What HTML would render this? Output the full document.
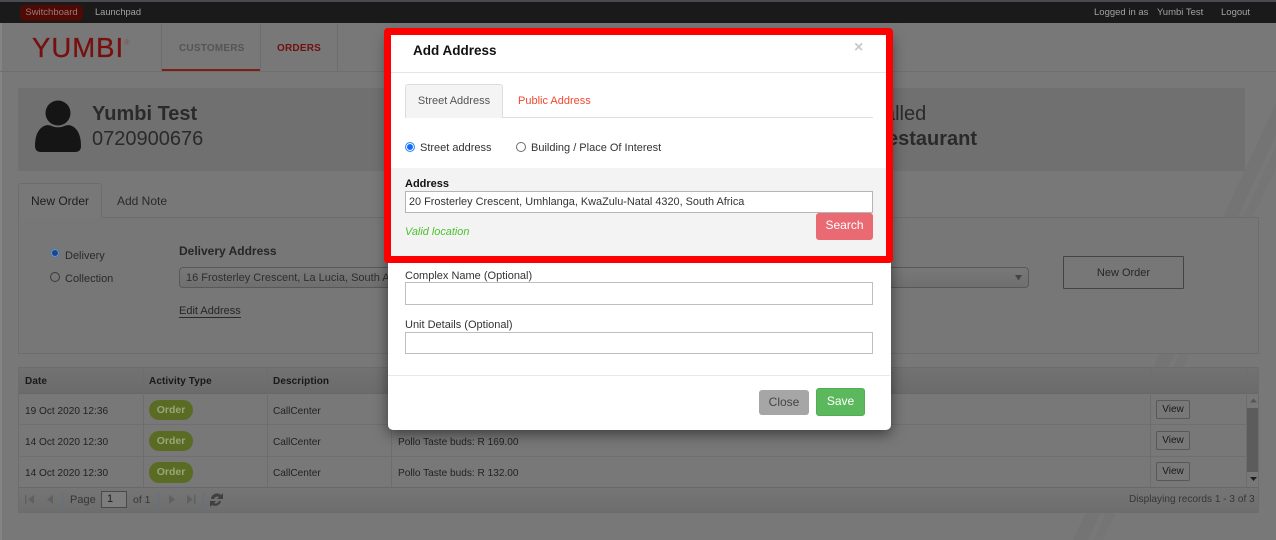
<!DOCTYPE html>
<html>
<head>
<meta charset="utf-8">
<style>
html,body{margin:0;padding:0}
body{width:1276px;height:540px;overflow:hidden;position:relative;background:#787878;font-family:"Liberation Sans",sans-serif;font-size:11px;color:#2c2c2c}
.a{position:absolute;white-space:nowrap;box-sizing:border-box}
.cell{font-size:10.100px;color:#222}
.hd{font-size:10px;letter-spacing:.1px;font-weight:bold;color:#181818}
.pill{position:absolute;left:149px;width:44px;height:20px;border-radius:10px;background:#5a6c24;color:#98a67a;font-size:10.500px;font-weight:bold;text-align:center;line-height:20px}
.view{position:absolute;left:1156px;width:34px;height:19px;border:1px solid #585858;border-radius:2px;background:#787878;color:#1a1a1a;font-size:10px;text-align:center;line-height:18px;box-sizing:border-box}
.hl{position:absolute;height:1px;background:#6d6d6d}
.vl{position:absolute;width:1px;background:#6d6d6d}
.m{font-size:11px;color:#333}
.inp{position:absolute;left:405px;width:468px;background:#fff;border:1px solid #bfbfbf;box-sizing:border-box}
.rad{position:absolute;width:10px;height:10px;border-radius:50%;box-sizing:border-box}
</style>
</head>
<body>
<!-- top bar -->
<div class="a" style="left:0;top:0;width:1276px;height:23px;background:#1a1a1a;border-top:2px solid #4a4a50"></div>
<div class="a" style="left:20px;top:5px;width:63px;height:16px;background:#4e0b06;border-radius:5px;color:#a07874;font-size:9.500px;text-align:center;line-height:15px">Switchboard</div>
<div class="a" style="left:95px;top:5px;color:#a3a3a3;font-size:9.300px;line-height:15px">Launchpad</div>
<div class="a" style="left:1094px;top:5px;color:#a3a3a3;font-size:9.500px;line-height:15px">Logged in as</div>
<div class="a" style="left:1157px;top:5px;color:#a3a3a3;font-size:9.500px;line-height:15px">Yumbi Test</div>
<div class="a" style="left:1221px;top:5px;color:#a3a3a3;font-size:9.500px;line-height:15px">Logout</div>
<div class="a" style="left:0;top:23px;width:2px;height:517px;background:#848484"></div>

<!-- diagonal decorations -->
<svg class="a" style="left:0;top:0" width="1276" height="540">
<path d="M1276 103L1276 135L1088 540L1073 540Z" fill="#747474"/>
<path d="M1276 146L1276 168L1103 540L1093 540Z" fill="#757575"/>
</svg>

<!-- nav -->
<div class="a" style="left:32px;top:32px;color:#761010;font-size:27.500px;line-height:32px;letter-spacing:1px;-webkit-text-stroke:.3px #761010">YUMBI</div>
<div class="a" style="left:124px;top:38px;color:#85504e;font-size:8px;line-height:9px">®</div>
<div class="hl" style="left:0;top:71px;width:1276px;background:#6e6e6e"></div>
<div class="vl" style="left:161px;top:24px;height:47px"></div>
<div class="vl" style="left:260px;top:24px;height:47px"></div>
<div class="vl" style="left:337px;top:24px;height:47px"></div>
<div class="a" style="left:162px;top:69px;width:98px;height:2px;background:#7a1f14"></div>
<div class="a" style="left:179px;top:42px;font-size:10px;font-weight:bold;color:#555;letter-spacing:.2px;line-height:14px">CUSTOMERS</div>
<div class="a" style="left:277px;top:42px;font-size:10px;font-weight:bold;color:#701010;letter-spacing:.2px;line-height:14px">ORDERS</div>

<!-- customer card -->
<div class="a" style="left:18px;top:88px;width:1227px;height:83px;background:#707070"></div>
<svg class="a" style="left:34px;top:100px" width="48" height="54" viewBox="0 0 48 54">
<circle cx="24" cy="13" r="12.500" fill="#151515"/>
<path d="M1 46C1 36 4 29 10 26C13 24.500 16 25 19 26.500C22 27.500 26 27.500 29 26.500C32 25 35 24.500 38 26C44 29 47 36 47 46C47 50 45 52 41 52H7C3 52 1 50 1 46Z" fill="#151515"/>
</svg>
<div class="a" style="left:92px;top:102px;font-size:20px;font-weight:bold;color:#2a2a2a;line-height:24px">Yumbi Test</div>
<div class="a" style="left:92px;top:127px;font-size:20px;color:#2a2a2a;line-height:25px">0720900676</div>
<div class="a" style="left:869.500px;top:102px;font-size:20px;color:#2a2a2a;line-height:24px">Called</div>
<div class="a" style="left:872.500px;top:127px;font-size:20px;font-weight:bold;color:#2a2a2a;line-height:24px">Restaurant</div>

<!-- tabs / order panel -->
<div class="a" style="left:18px;top:217px;width:1241px;height:137px;border:1px solid #6d6d6d;background:#777"></div>
<div class="a" style="left:18px;top:183px;width:84px;height:35px;border:1px solid #6d6d6d;border-bottom:none;background:#787878;border-radius:3px 3px 0 0;font-size:12px;color:#1e1e1e;text-align:center;line-height:34px">New Order</div>
<div class="a" style="left:117px;top:194px;font-size:12px;color:#2a2a2a;line-height:15px">Add Note</div>
<div class="rad" style="left:50px;top:248px;background:#124a96;border:1px solid #557aaa;box-shadow:inset 0 0 0 1px #87949f"></div>
<div class="a" style="left:65px;top:249px;line-height:14px;color:#2a2a2a;font-size:11px">Delivery</div>
<div class="rad" style="left:50px;top:272px;border:1px solid #3a3a3a"></div>
<div class="a" style="left:65px;top:272px;line-height:15px;color:#2a2a2a;font-size:11px">Collection</div>
<div class="a" style="left:179px;top:244px;font-size:12px;font-weight:bold;color:#262626;line-height:14px">Delivery Address</div>
<div class="a" style="left:179px;top:267px;width:850px;height:21px;border:1px solid #585858;border-radius:4px;background:linear-gradient(#787878,#6f6f6f);color:#2e2e2e;font-size:11px;line-height:21px;padding-left:6px">16 Frosterley Crescent, La Lucia, South Africa</div>
<svg class="a" style="left:1015px;top:275px" width="8" height="6"><path d="M0 0H7L3.500 5.500Z" fill="#444"/></svg>
<div class="a" style="left:179px;top:305px;height:12px;font-size:11px;color:#262626;line-height:12px;border-bottom:1px solid #2a2a2a;box-sizing:content-box">Edit Address</div>
<div class="a" style="left:1063px;top:256px;width:121px;height:33px;border:1px solid #444;border-radius:1px;font-size:11px;color:#262626;text-align:center;line-height:32px">New Order</div>

<!-- table -->
<div class="a" style="left:18px;top:367px;width:1241px;height:146px;border:1px solid #6d6d6d;background:#787878"></div>
<div class="a" style="left:19px;top:368px;width:1239px;height:25px;background:linear-gradient(#727272,#6b6b6b)"></div>
<div class="hl" style="left:19px;top:393px;width:1239px;background:#686868"></div>
<div class="hl" style="left:19px;top:424px;width:1228px;background:#6f6f6f"></div>
<div class="hl" style="left:19px;top:456px;width:1228px;background:#6f6f6f"></div>
<div class="hl" style="left:19px;top:487px;width:1239px;background:#686868"></div>
<div class="vl" style="left:143px;top:368px;height:119px"></div>
<div class="vl" style="left:267px;top:368px;height:119px"></div>
<div class="vl" style="left:391px;top:393px;height:94px"></div>
<div class="vl" style="left:1150px;top:368px;height:119px"></div>
<div class="vl" style="left:1246px;top:368px;height:119px"></div>
<div class="a hd" style="left:25px;top:375px;line-height:13px">Date</div>
<div class="a hd" style="left:149px;top:375px;line-height:13px">Activity Type</div>
<div class="a hd" style="left:273px;top:375px;line-height:13px">Description</div>
<div class="a cell" style="left:25px;top:405px;line-height:13px">19 Oct 2020 12:36</div>
<div class="a cell" style="left:25px;top:436px;line-height:13px">14 Oct 2020 12:30</div>
<div class="a cell" style="left:25px;top:467px;line-height:13px">14 Oct 2020 12:30</div>
<div class="pill" style="top:400px">Order</div>
<div class="pill" style="top:431px">Order</div>
<div class="pill" style="top:462px;height:21px">Order</div>
<div class="a cell" style="left:273px;top:405px;line-height:13px">CallCenter</div>
<div class="a cell" style="left:273px;top:436px;line-height:13px">CallCenter</div>
<div class="a cell" style="left:273px;top:467px;line-height:13px">CallCenter</div>
<div class="a cell" style="left:398px;top:436px;line-height:13px">Pollo Taste buds: R 169.00</div>
<div class="a cell" style="left:398px;top:467px;line-height:13px">Pollo Taste buds: R 132.00</div>
<div class="view" style="top:400px">View</div>
<div class="view" style="top:431px">View</div>
<div class="view" style="top:462px">View</div>
<svg class="a" style="left:1247px;top:395px" width="12" height="92">
<path d="M3 7.500L6.500 3.500L10 7.500Z" fill="#555"/>
<rect x="0" y="13" width="11" height="64" fill="#5c5c5c"/>
<path d="M3 82H10L6.500 86Z" fill="#1e1e1e"/>
</svg>
<div class="a" style="left:19px;top:488px;width:1239px;height:24px;background:linear-gradient(#757575,#6e6e6e)"></div>
<svg class="a" style="left:22px;top:490px" width="210" height="20" fill="#606060">
<rect x="3" y="5" width="1.500" height="9"/><path d="M12 5V14L6 9.500Z"/>
<path d="M31 5V14L25 9.500Z"/>
<rect x="40" y="2" width="1" height="15" fill="#5f7085"/>
<rect x="136" y="2" width="1" height="15" fill="#5f7085"/>
<path d="M147 5V14L153 9.500Z"/>
<path d="M165 5V14L171 9.500Z"/><rect x="172" y="5" width="1.500" height="9"/>
<rect x="181" y="2" width="1" height="15" fill="#5f7085"/>
<path d="M189 9A6 6 0 0 1 199 5L201 3V9H195L197 7A3.500 3.500 0 0 0 192 9ZM199 11A6 6 0 0 1 190 15L188 17V11H194L192 13A3.500 3.500 0 0 0 197 11Z" fill="#404040"/>
</svg>
<div class="a" style="left:70px;top:493px;font-size:11px;color:#363636;line-height:14px">Page</div>
<div class="a" style="left:101px;top:491px;width:26px;height:17px;border:1px solid #494949;background:#7d7d7d;color:#1e1e1e;font-size:11px;line-height:15px;padding-left:5px">1</div>
<div class="a" style="left:133px;top:493px;font-size:10.500px;color:#363636;line-height:14px">of 1</div>
<div class="a" style="left:1129px;top:493px;font-size:10.100px;color:#363636;line-height:14px">Displaying records 1 - 3 of 3</div>

<!-- modal -->
<div class="a" style="left:388px;top:32px;width:503px;height:398px;background:#fff;border-radius:5px;box-shadow:0 4px 14px rgba(0,0,0,.5)"></div>
<div class="a" style="left:391px;top:72px;width:496px;height:1px;background:#e6e6e6"></div>
<div class="a" style="left:413px;top:42px;font-size:13.500px;font-weight:bold;color:#111;line-height:17px">Add Address</div>
<div class="a" style="left:854px;top:39px;font-size:16px;font-weight:bold;color:#c9c9c9;line-height:17px">×</div>
<div class="a" style="left:405px;top:117px;width:468px;height:1px;background:#ddd"></div>
<div class="a" style="left:405px;top:84px;width:98px;height:34px;background:#f4f4f4;border:1px solid #ddd;border-bottom:none;border-radius:3px 3px 0 0;color:#555;font-size:11px;text-align:center;line-height:32px">Street Address</div>
<div class="a" style="left:518px;top:94px;color:#f2492f;font-size:11px;line-height:14px">Public Address</div>
<div class="rad" style="left:405px;top:142px;background:#0d6efd;border:1px solid #3b8af5;box-shadow:inset 0 0 0 1px #fff"></div>
<div class="a m" style="left:420px;top:141px;line-height:14px">Street address</div>
<div class="rad" style="left:516px;top:142px;border:1px solid #6b6b6b;background:#fff"></div>
<div class="a m" style="left:531px;top:141px;line-height:14px">Building / Place Of Interest</div>
<div class="a" style="left:391px;top:168px;width:496px;height:89px;background:#f3f3f3"></div>
<div class="a" style="left:405px;top:178px;font-size:11px;font-weight:bold;color:#111;line-height:13px">Address</div>
<div class="inp" style="top:191px;height:22px;color:#333;font-size:10.900px;line-height:21px;padding-left:3px;border-color:#b5b5b5">20 Frosterley Crescent, Umhlanga, KwaZulu-Natal 4320, South Africa</div>
<div class="a" style="left:816px;top:213px;width:57px;height:27px;background:#e96a72;border-radius:3px;color:#fff;font-size:12px;text-align:center;line-height:25px">Search</div>
<div class="a" style="left:405px;top:226px;color:#4cc12e;font-size:10.900px;font-style:italic;line-height:13px">Valid location</div>
<div class="a" style="left:384px;top:28px;width:509px;height:235px;border:7px solid #ff0000;border-radius:4px"></div>
<div class="a m" style="left:405px;top:269px;line-height:14px">Complex Name (Optional)</div>
<div class="inp" style="top:282px;height:23px"></div>
<div class="a m" style="left:405px;top:318px;line-height:14px">Unit Details (Optional)</div>
<div class="inp" style="top:332px;height:22px"></div>
<div class="a" style="left:388px;top:375px;width:502px;height:1px;background:#e8e8e8"></div>
<div class="a" style="left:759px;top:390px;width:50px;height:25px;background:#a6a6a6;border-radius:3px;color:#444;font-size:12px;text-align:center;line-height:24px">Close</div>
<div class="a" style="left:816px;top:388px;width:49px;height:28px;background:#5cb85c;border:1px solid #53ad53;border-radius:3px;color:#fff;font-size:12px;text-align:center;line-height:25px">Save</div>
</body>
</html>
